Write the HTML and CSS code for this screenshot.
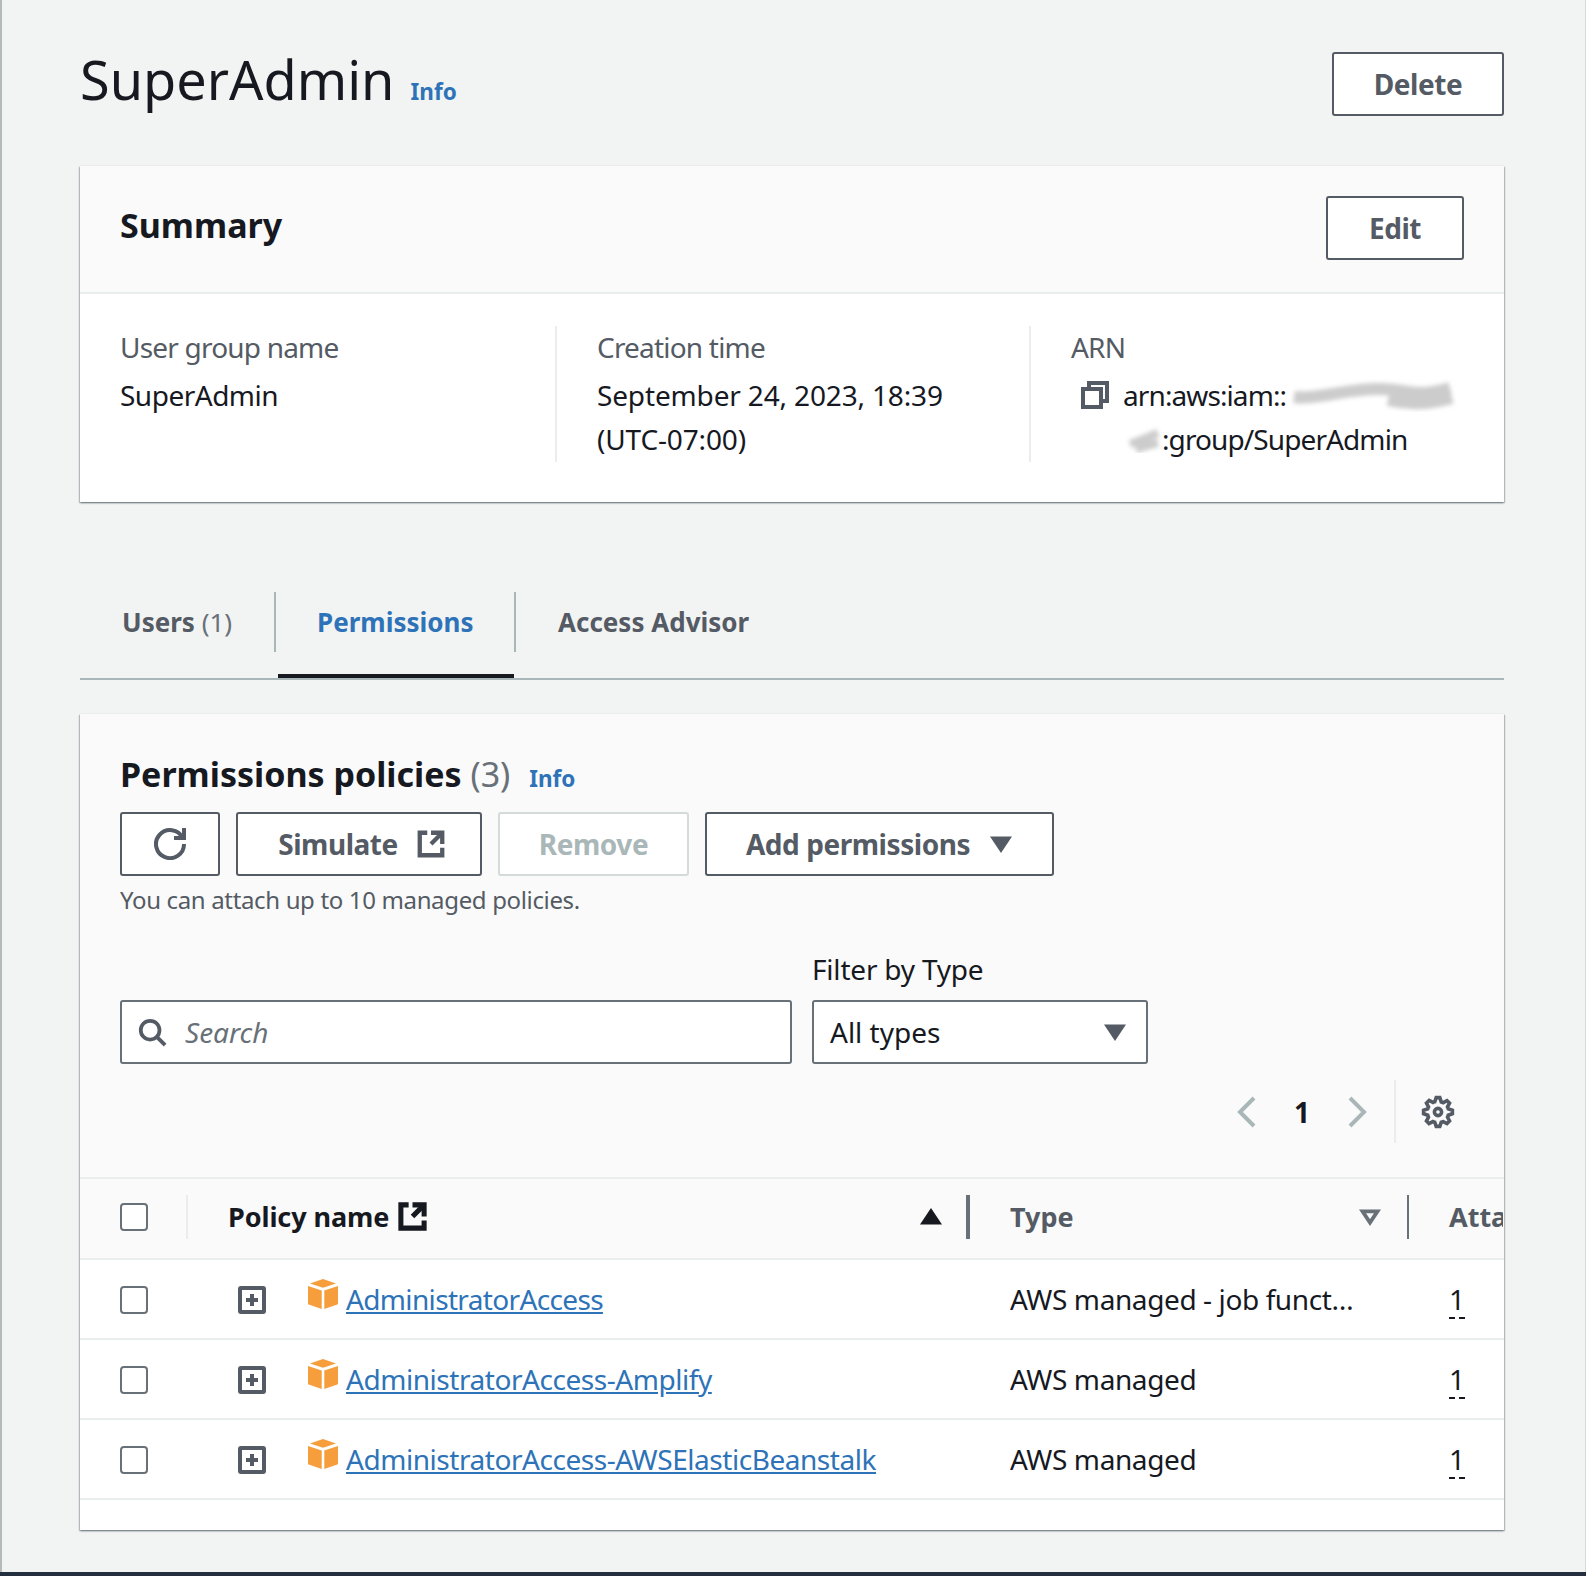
FILE: index.html
```html
<!DOCTYPE html>
<html lang="en">
<head>
    <meta charset="UTF-8">
    <title>SuperAdmin</title>
    <link rel="stylesheet" href="styles.css">
</head>
<body>
    <svg class="defs" width="0" height="0">
        <defs>
            <filter id="smudge" x="-20%" y="-150%" width="140%" height="400%"><feGaussianBlur stdDeviation="2"/></filter>
        </defs>
    </svg>

    <div class="page">
        <div class="page-head">
            <h1>SuperAdmin <a class="info" href="#">Info</a></h1>
            <button class="btn btn-delete">Delete</button>
        </div>

        <section class="card">
            <div class="card-head">
                <h2>Summary</h2>
                <button class="btn btn-edit">Edit</button>
            </div>
            <div class="summary">
                <div class="col">
                    <div class="label">User group name</div>
                    <div class="value">SuperAdmin</div>
                </div>
                <div class="col">
                    <div class="label">Creation time</div>
                    <div class="value value-date">September 24, 2023, 18:39<br>(UTC-07:00)</div>
                </div>
                <div class="col col-last">
                    <div class="label">ARN</div>
                    <div class="arn">
                        <svg class="icon icon-copy" viewBox="0 0 16 16"><path d="M2 5h9v9H2z"/><path d="M5 5V2h9v9h-3"/></svg>
                        <div class="value">
                            <div class="arn-line">arn:aws:iam::<svg class="smudge smudge-a" viewBox="0 0 170 34"><path d="M6 19C30 22 60 10 92 11S130 20 162 10M100 22C125 28 145 25 164 20" filter="url(#smudge)"/></svg></div>
                            <div class="arn-line arn-second"><svg class="smudge smudge-b" viewBox="0 0 36 28"><path d="M4 19C14 16 22 12 32 8M10 24C18 22 26 19 32 18" filter="url(#smudge)"/></svg>:group/SuperAdmin</div>
                        </div>
                    </div>
                </div>
            </div>
        </section>

        <div class="tabs">
            <a class="tab tab-first" href="#"><span>Users <em>(1)</em></span></a>
            <a class="tab active" href="#"><span>Permissions</span></a>
            <a class="tab tab-last" href="#"><span>Access Advisor</span></a>
        </div>

        <section class="card card-policies">
            <div class="policies-head">
                <h3>Permissions policies <em>(3)</em> <a class="info info-small" href="#">Info</a></h3>
                <div class="actions">
                    <button class="btn btn-refresh">
                        <svg class="icon icon-refresh" viewBox="0 0 16 16"><path d="M10 5h5V0"/><path d="M15 8a7 7 0 1 1-.7-3"/></svg>
                    </button>
                    <button class="btn btn-simulate">Simulate
                        <svg class="icon icon-ext" viewBox="0 0 16 16"><path d="M14 8V2H8"/><path d="M14 2 8 8"/><path d="M6 2H2v12h12v-4"/></svg>
                    </button>
                    <button class="btn btn-remove">Remove</button>
                    <button class="btn btn-add">Add permissions
                        <svg class="icon icon-caret" viewBox="0 0 16 16"><path d="M4 5h8l-4 6z"/></svg>
                    </button>
                </div>
                <p class="help">You can attach up to 10 managed policies.</p>

                <div class="filters">
                    <div class="search">
                        <svg class="icon icon-search" viewBox="0 0 16 16"><circle cx="7" cy="7" r="5"/><path d="m15 15-4.7-4.7"/></svg>
                        <span>Search</span>
                    </div>
                    <div class="filter-type">
                        <div class="filter-label">Filter by Type</div>
                        <div class="select">
                            <span>All types</span>
                            <svg class="icon icon-caret" viewBox="0 0 16 16"><path d="M4 5h8l-4 6z"/></svg>
                        </div>
                    </div>
                </div>

                <div class="pager">
                    <svg class="icon icon-chev" viewBox="0 0 16 16"><path d="M11 1 4 8l7 7"/></svg>
                    <span class="pager-num">1</span>
                    <svg class="icon icon-chev" viewBox="0 0 16 16"><path d="m5 1 7 7-7 7"/></svg>
                    <span class="pager-sep"></span>
                    <svg class="icon icon-gear" viewBox="-2 -2 20 20"><path d="M13.3 5.2l1.1-2.1L13 1.7l-2.1 1.1c-.3-.2-.7-.3-1.1-.4L9 0H7l-.8 2.3c-.3.1-.7.2-1 .4L3.1 1.6 1.6 3.1l1.1 2.1c-.2.3-.3.7-.4 1L0 7v2l2.3.8c.1.4.3.7.4 1.1l-1.1 2.1 1.4 1.4 2.1-1.1c.3.2.7.3 1.1.4L7 16h2l.8-2.3c.4-.1.7-.3 1.1-.4l2.1 1.1 1.4-1.4-1.1-2.1c.2-.3.3-.7.4-1.1L16 9V7l-2.3-.8c-.1-.3-.2-.7-.4-1z"/><circle cx="8" cy="8" r="2"/></svg>
                </div>
            </div>

            <div class="table">
                <div class="row row-head">
                    <div class="th th-check"><span class="checkbox"></span></div>
                    <div class="th th-name">
                        <span class="th-title">Policy name
                            <svg class="icon icon-ext icon-dark" viewBox="0 0 16 16"><path d="M14 8V2H8"/><path d="M14 2 8 8"/><path d="M6 2H2v12h12v-4"/></svg>
                        </span>
                        <svg class="icon icon-sort sort-on" viewBox="0 0 16 16"><path d="M4 11h8L8 5z"/></svg>
                    </div>
                    <div class="th th-type">
                        <span>Type</span>
                        <svg class="icon icon-sort sort-off" viewBox="0 0 16 16"><path d="M4 5h8l-4 6z"/></svg>
                    </div>
                    <div class="th th-atta">Attached entities</div>
                </div>

                <div class="row">
                    <div class="td td-check"><span class="checkbox"></span></div>
                    <div class="td td-name">
                        <svg class="icon-expand" viewBox="0 0 28 28"><rect x="2" y="2" width="24" height="24" rx="1"/><path d="M8 14h12M14 8v12"/></svg>
                        <svg class="icon-box" viewBox="0 0 30 30"><path d="M15 0l13 4.4L15 8.8 2 4.4z"/><path d="M0 7l13.7 4.6V30L0 25.2z"/><path d="M30 7l-13.7 4.6V30L30 25.2z"/></svg>
                        <a class="link-short" href="#">AdministratorAccess</a>
                    </div>
                    <div class="td td-type"><span class="clip">AWS managed - job function</span></div>
                    <div class="td"><span class="count">1</span></div>
                </div>

                <div class="row">
                    <div class="td td-check"><span class="checkbox"></span></div>
                    <div class="td td-name">
                        <svg class="icon-expand" viewBox="0 0 28 28"><rect x="2" y="2" width="24" height="24" rx="1"/><path d="M8 14h12M14 8v12"/></svg>
                        <svg class="icon-box" viewBox="0 0 30 30"><path d="M15 0l13 4.4L15 8.8 2 4.4z"/><path d="M0 7l13.7 4.6V30L0 25.2z"/><path d="M30 7l-13.7 4.6V30L30 25.2z"/></svg>
                        <a href="#">AdministratorAccess-Amplify</a>
                    </div>
                    <div class="td td-type"><span class="clip">AWS managed</span></div>
                    <div class="td"><span class="count">1</span></div>
                </div>

                <div class="row">
                    <div class="td td-check"><span class="checkbox"></span></div>
                    <div class="td td-name">
                        <svg class="icon-expand" viewBox="0 0 28 28"><rect x="2" y="2" width="24" height="24" rx="1"/><path d="M8 14h12M14 8v12"/></svg>
                        <svg class="icon-box" viewBox="0 0 30 30"><path d="M15 0l13 4.4L15 8.8 2 4.4z"/><path d="M0 7l13.7 4.6V30L0 25.2z"/><path d="M30 7l-13.7 4.6V30L30 25.2z"/></svg>
                        <a href="#">AdministratorAccess-AWSElasticBeanstalk</a>
                    </div>
                    <div class="td td-type"><span class="clip">AWS managed</span></div>
                    <div class="td"><span class="count">1</span></div>
                </div>
            </div>
        </section>
    </div>
    <div class="bottom-bar"></div>
</body>
</html>
```

FILE: styles.css
```css
*{
    box-sizing: border-box;
    font-family: "Noto Sans", sans-serif;
}

body{
    margin: 0;
    background-color: #f2f3f3;
    color: #16191f;
    font-size: 28px;
    height: 1576px;
    overflow: hidden;
}

a{
    color: #2e73b8;
}

.defs{
    display: block;
    height: 0;
}

.page{
    height: 1572px;
    padding: 0 81px 0 78px;
    border-left: 2px solid #b5bbbb;
    border-right: 1px solid #d5dbdb;
}

.page-head{
    height: 166px;
    display: flex;
    justify-content: space-between;
    align-items: flex-start;
    padding-top: 52px;
}

h1{
    margin: -1px 0 0;
    font-size: 54px;
    font-weight: 400;
    line-height: 56px;
}

.info{
    font-size: 22.5px;
    font-weight: 700;
    text-decoration: none;
    margin-left: 2px;
}

.btn{
    height: 64px;
    border: 2px solid #545b64;
    border-radius: 3px;
    background-color: white;
    color: #545b64;
    font-size: 28px;
    font-weight: 700;
    letter-spacing: -0.45px;
    padding: 0;
    display: flex;
    align-items: center;
    justify-content: center;
}

.btn-delete{
    width: 172px;
}

.btn-edit{
    width: 138px;
}

.icon{
    fill: none;
    stroke: #545b64;
    stroke-width: 2;
    flex: none;
}

.card{
    background-color: white;
    box-shadow: 0 1px 2px 0 rgba(0, 28, 36, 0.4), 1px 1px 1px 0 rgba(0, 28, 36, 0.15), -1px 1px 1px 0 rgba(0, 28, 36, 0.15);
    overflow: hidden;
}

.card-head{
    height: 128px;
    background-color: #fafafa;
    border-bottom: 2px solid #eaeded;
    display: flex;
    justify-content: space-between;
    align-items: center;
    padding: 0 40px 3px;
}

h2{
    margin: -6px 0 0;
    font-size: 34px;
    font-weight: 700;
}

.summary{
    height: 208px;
    padding-top: 32px;
    display: grid;
    grid-template-columns: 477px 474px 1fr;
    align-items: start;
}

.col{
    height: 136px;
    padding-left: 40px;
    border-right: 2px solid #eaeded;
}

.col-last{
    border-right: none;
}

.label{
    color: #545b64;
    line-height: 42px;
    letter-spacing: -0.8px;
}

.value{
    line-height: 44px;
    margin-top: 5px;
    letter-spacing: -0.5px;
}

.value-date{
    letter-spacing: -0.15px;
}

.arn{
    display: flex;
}

.icon-copy{
    width: 32px;
    height: 32px;
    margin: 11px 12px 0 8px;
}

.arn .value{
    min-width: 0;
    margin-top: 5px;
}

.arn-line{
    white-space: nowrap;
    display: flex;
    align-items: center;
    letter-spacing: -0.9px;
}

.arn-second{
    padding-left: 3px;
}

.smudge{
    fill: none;
    stroke: #cccccc;
    stroke-width: 12;
}

.smudge-a{
    width: 170px;
    height: 34px;
    margin-left: 2px;
}

.smudge-b{
    width: 36px;
    height: 28px;
    stroke-width: 8;
}

.tabs{
    margin-top: 90px;
    height: 88px;
    border-bottom: 2px solid #aab7b8;
    display: flex;
    align-items: flex-start;
}

.tab{
    height: 86px;
    position: relative;
    text-decoration: none;
    color: #545b64;
    font-size: 26px;
    font-weight: 700;
}

.tab span{
    display: block;
    height: 60px;
    line-height: 60px;
    padding: 0 42px;
    border-right: 2px solid #aab7b8;
    white-space: nowrap;
}

.tab em{
    font-style: normal;
    font-weight: 400;
    color: #687078;
}

.tab-first span{
    width: 196px;
}

.tab-last span{
    border-right: none;
}

.tab.active{
    color: #2e73b8;
}

.tab.active span{
    width: 240px;
    padding-left: 41px;
}

.tab.active::after{
    content: "";
    position: absolute;
    left: 2px;
    right: 2px;
    bottom: 0;
    height: 4px;
    background-color: #16191f;
}

.card-policies{
    margin-top: 34px;
    height: 816px;
}

.policies-head{
    background-color: #fafafa;
    height: 465px;
    padding: 38px 40px 0;
    border-bottom: 2px solid #eaeded;
}

h3{
    margin: 0;
    font-size: 34px;
    font-weight: 700;
    line-height: 44px;
}

h3 em{
    font-style: normal;
    font-weight: 400;
    color: #687078;
}

.info-small{
    margin-left: 10px;
}

.actions{
    display: flex;
    gap: 16px;
    margin-top: 11px;
}

.btn-refresh{
    width: 100px;
}

.icon-refresh{
    width: 32px;
    height: 32px;
}

.btn-simulate{
    width: 246px;
    gap: 18px;
    padding-left: 6px;
}

.btn-simulate .icon-ext{
    width: 30px;
    height: 30px;
    stroke-width: 2.3;
}

.btn-remove{
    width: 191px;
    border-color: #d5dbdb;
    color: #aab7b8;
}

.btn-add{
    width: 349px;
    gap: 16px;
    padding-left: 3px;
}

.icon-caret{
    width: 30px;
    height: 30px;
    fill: #545b64;
}

.help{
    margin: 7px 0 0;
    font-size: 24px;
    line-height: 34px;
    letter-spacing: -0.35px;
    color: #545b64;
}

.filters{
    display: flex;
    align-items: flex-end;
    gap: 20px;
    margin-top: 34px;
}

.search{
    width: 672px;
    height: 64px;
    border: 2px solid #687078;
    border-radius: 3px;
    background-color: white;
    display: flex;
    align-items: center;
    gap: 18px;
    padding-left: 15px;
    font-style: italic;
    color: #687078;
}

.icon-search{
    width: 30px;
    height: 30px;
}

.filter-label{
    line-height: 36px;
    margin-bottom: 13px;
    letter-spacing: -0.2px;
}

.select{
    width: 336px;
    height: 64px;
    border: 2px solid #687078;
    border-radius: 3px;
    background-color: white;
    display: flex;
    align-items: center;
    justify-content: space-between;
    padding: 0 16px 0 16px;
}

.pager{
    margin-top: 16px;
    height: 63px;
    display: flex;
    align-items: center;
    justify-content: flex-end;
    padding-right: 8px;
}

.icon-chev{
    width: 32px;
    height: 32px;
    stroke: #aab7b8;
}

.pager-num{
    width: 76px;
    text-align: center;
    font-weight: 700;
}

.pager-sep{
    width: 2px;
    height: 63px;
    background-color: #eaeded;
    margin: 0 24px 0 22px;
}

.icon-gear{
    width: 36px;
    height: 36px;
}

.row{
    display: grid;
    grid-template-columns: 108px 782px 439px 94px;
    height: 80px;
    align-items: center;
    border-bottom: 2px solid #eaeded;
}

.row-head{
    height: 81px;
    padding-bottom: 4px;
    background-color: #fafafa;
    color: #16191f;
    font-size: 27px;
    font-weight: 700;
}

.th{
    height: 44px;
    display: flex;
    align-items: center;
    justify-content: space-between;
    white-space: nowrap;
}

.th-check{
    padding-left: 40px;
    border-right: 2px solid #eaeded;
}

.th-name{
    padding: 0 20px 0 40px;
    border-right: 4px solid #687078;
}

.th-title{
    display: flex;
    align-items: center;
    gap: 8px;
    letter-spacing: -0.1px;
}

.icon-dark{
    width: 31px;
    height: 31px;
    stroke: #16191f;
    stroke-width: 2.6;
}

.icon-sort{
    width: 30px;
    height: 30px;
}

.sort-on{
    fill: #16191f;
    stroke: #16191f;
}

.sort-off{
    stroke: #687078;
}

.th-type{
    padding: 0 22px 0 40px;
    border-right: 2px solid #687078;
    color: #545b64;
}

.th-atta{
    padding-left: 40px;
    color: #545b64;
    overflow: hidden;
}

.checkbox{
    display: block;
    width: 28px;
    height: 28px;
    border: 2px solid #687078;
    border-radius: 4px;
    background-color: white;
}

.td-check{
    padding-left: 40px;
}

.td-check .checkbox{
    margin-top: 2px;
}

.td-name{
    display: flex;
    align-items: center;
    padding-left: 50px;
}

.td-name a{
    letter-spacing: -0.45px;
}

.td-name .link-short{
    letter-spacing: -0.65px;
}

.icon-expand{
    width: 28px;
    height: 28px;
    fill: none;
    stroke: #545b64;
    stroke-width: 4;
    margin: 2px 42px 0 0;
}

.icon-box{
    width: 30px;
    height: 30px;
    fill: #f59e3b;
    margin: -10px 8px 0 0;
}

.td-type{
    padding-left: 40px;
}

.clip{
    display: block;
    width: 348px;
    white-space: nowrap;
    overflow: hidden;
    text-overflow: ellipsis;
    letter-spacing: -0.4px;
}

.td:last-child{
    padding-left: 40px;
}

.count{
    border-bottom: 2px dashed #16191f;
    line-height: 36px;
    display: inline-block;
}

.bottom-bar{
    height: 4px;
    background-color: #232f3e;
}
```
